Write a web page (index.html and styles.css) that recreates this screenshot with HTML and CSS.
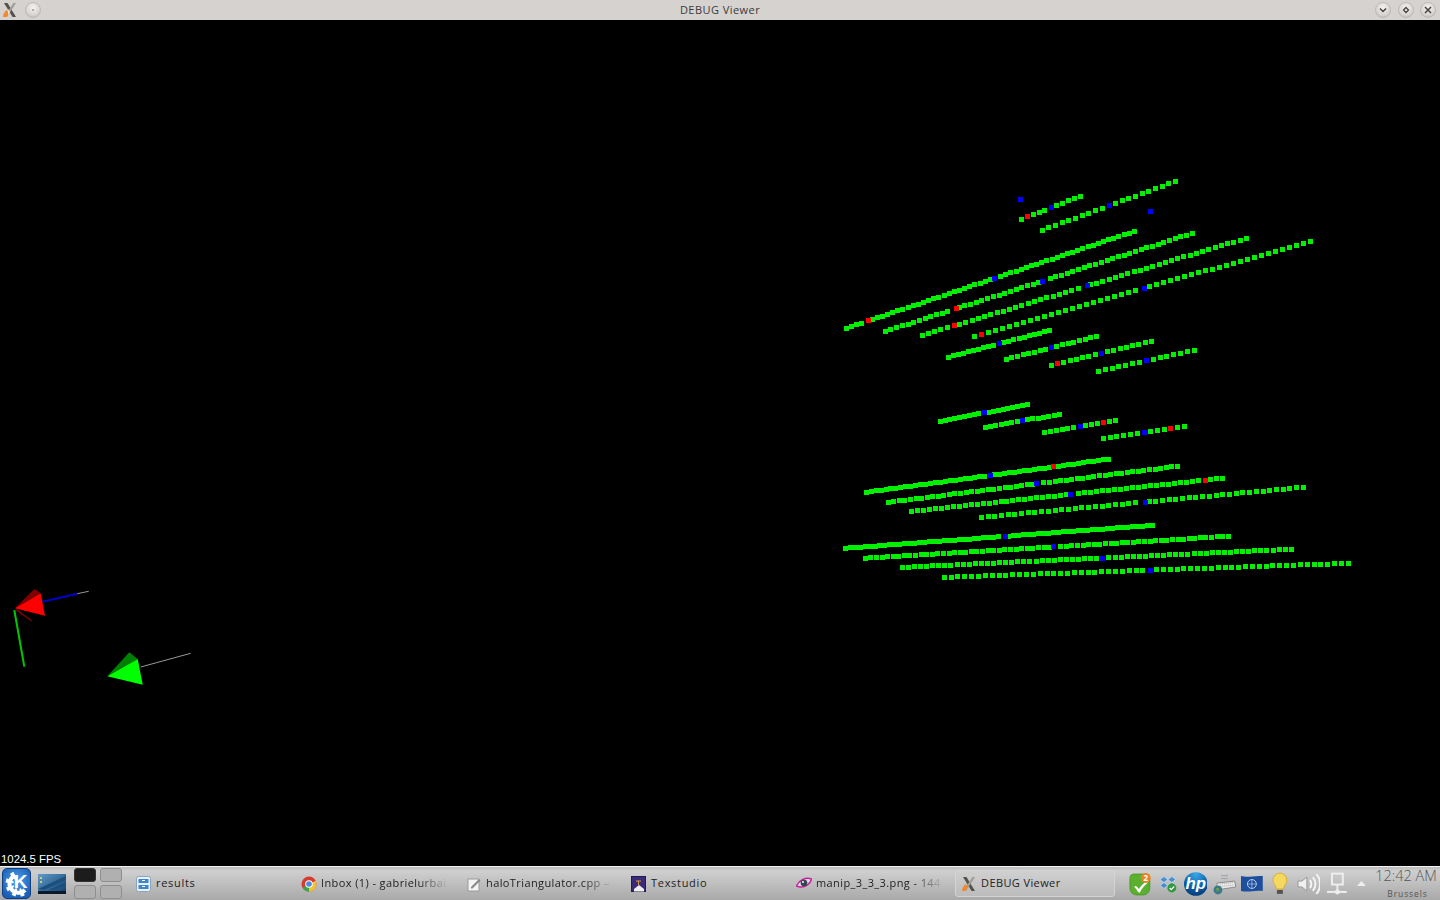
FILE: index.html
```html
<!DOCTYPE html>
<html lang="en">
<head>
<meta charset="utf-8">
<title>DEBUG Viewer</title>
<link rel="stylesheet" href="styles.css">
</head>
<body>
<header class="titlebar">
  <div class="title-left">
    <svg class="x-icon" width="16" height="16" viewBox="0 0 16 16"><path d="M2 1h3.500l8.500 14h-3.500z" fill="#55524e"/><path d="M14 1h-2.500L2 15h3z" fill="#a09c97"/><path d="M1 15c0-3 1.500-5 3.500-7l2 2.500L5 15z" fill="#ef8a2e"/><path d="M6 7l2 3-2 3" fill="#f6e8d8"/></svg>
    <span class="wbtn"><i class="dot"></i></span>
  </div>
  <div class="title-text">DEBUG Viewer</div>
  <div class="title-right">
    <span class="wbtn"><svg width="8" height="8" viewBox="0 0 8 8"><path d="M1 2.500l3 3 3-3" fill="none" stroke="#444" stroke-width="1.500"/></svg></span>
    <span class="wbtn"><svg width="8" height="8" viewBox="0 0 8 8"><path d="M4 1.500L6.500 4 4 6.500 1.500 4z" fill="none" stroke="#444" stroke-width="1.300"/></svg></span>
    <span class="wbtn"><svg width="8" height="8" viewBox="0 0 8 8"><path d="M1 1l6 6M7 1L1 7" fill="none" stroke="#444" stroke-width="1.500"/></svg></span>
  </div>
</header>

<main class="viewer">
  <svg id="scene" class="scene" viewBox="0 20 1440 846" width="1440" height="846">
    <g id="points" shape-rendering="crispEdges"></g>
    <polygon points="15,608.300 34.300,589 40.700,593.300" fill="#7f0000"/>
    <line x1="16" y1="609.300" x2="31.700" y2="621" stroke="#7f0000" stroke-width="1.500"/>
    <line x1="42.300" y1="601.700" x2="77.300" y2="593.700" stroke="#0000c8" stroke-width="2"/>
    <line x1="77.300" y1="593.700" x2="88.700" y2="591.300" stroke="#999" stroke-width="1"/>
    <line x1="14.300" y1="610" x2="24.300" y2="666.700" stroke="#00c800" stroke-width="2"/>
    <polygon points="15,608.300 40.700,593.300 45,615.700" fill="#ff0000"/>
    <polygon points="107.300,676.300 129.300,652.300 137.700,659" fill="#007f00"/>
    <line x1="140.700" y1="667" x2="190.700" y2="653.300" stroke="#999" stroke-width="1"/>
    <polygon points="107.300,676.300 137.700,659 142.700,684.700" fill="#00ff00"/>
  </svg>
  <div class="fps">1024.5 FPS</div>
</main>

<footer class="taskbar">
  <div class="launcher">
    <svg class="gear" width="28" height="30" viewBox="0 0 28 30"><path d="M12 6.500A9 9 0 1 0 22 21" fill="none" stroke="#fff" stroke-width="4"/><path d="M12 6.500A9 9 0 1 0 22 21" fill="none" stroke="#fff" stroke-width="8" stroke-dasharray="3 3.500"/></svg>
    <span class="kde-k">K</span>
  </div>
  <svg class="desktop-icon" width="28" height="20" viewBox="0 0 28 20">
    <defs><linearGradient id="dsk" x1="0" y1="0" x2="1" y2="1"><stop offset="0" stop-color="#5f9ccc"/><stop offset="1" stop-color="#0f3c66"/></linearGradient></defs>
    <rect width="28" height="20" fill="url(#dsk)"/>
    <path d="M0 15L28 2v4L6 16zM10 16L28 8v3l-12 5z" fill="#1b4f80"/>
    <rect x="0" y="17" width="28" height="3" fill="#0a1a2a"/>
    <rect x="2" y="3" width="2" height="2" fill="#c8d070"/><rect x="2" y="7" width="2" height="2" fill="#c8d070"/>
  </svg>
  <div class="pager">
    <span class="desk active"></span><span class="desk"></span><span class="desk"></span><span class="desk"></span>
  </div>
  <div class="tasks">
    <div class="task">
      <svg width="16" height="16" viewBox="0 0 16 16"><rect x=".5" y=".5" width="14" height="15" rx="2" fill="#e8f0f8" stroke="#8aa4c0"/><rect x="2.500" y="3" width="10" height="4" fill="#3f86d0"/><rect x="2.500" y="9" width="10" height="4" fill="#3f86d0"/><rect x="6" y="4" width="3" height="1" fill="#fff"/><rect x="6" y="10" width="3" height="1" fill="#fff"/></svg>
      <span class="task-label wide">results</span>
    </div>
    <div class="task">
      <svg width="16" height="16" viewBox="0 0 16 16"><circle cx="8" cy="8" r="7.500" fill="#d93a2e"/><path d="M8 8L1.500 11.800A7.500 7.500 0 0 0 8 15.500z" fill="#3ca648"/><path d="M8 8l6.700-3.300A7.500 7.500 0 0 1 8 15.500z" fill="#f2c230"/><circle cx="8" cy="8" r="3.800" fill="#fff"/><circle cx="8" cy="8" r="2.800" fill="#4a8ae0"/></svg>
      <span class="task-label fade">Inbox (1) - gabrielurbai</span>
    </div>
    <div class="task">
      <svg width="16" height="16" viewBox="0 0 16 16"><path d="M2 3h11v12H2z" fill="#f4f4f4" stroke="#999"/><path d="M5 11l8-8 1.500 1.500-8 8H5z" fill="#888"/></svg>
      <span class="task-label fade">haloTriangulator.cpp –</span>
    </div>
    <div class="task">
      <svg width="16" height="16" viewBox="0 0 16 16"><rect x=".5" y=".5" width="14" height="15" fill="#3a2a78" stroke="#241a50"/><path d="M3 13l5-4 5 4v2.500H3z" fill="#eee"/><path d="M5 5h5M7.500 5v4" stroke="#d8a040" fill="none"/></svg>
      <span class="task-label wide">Texstudio</span>
    </div>
    <div class="task">
      <svg width="16" height="16" viewBox="0 0 16 16"><path d="M.5 10C3 4 10 1 15.500 3 14 9 7 13 .5 10z" fill="#d8d8e8" stroke="#c8209a" stroke-width="1.500"/><circle cx="8" cy="7" r="3.300" fill="#304850"/><circle cx="7" cy="6" r="1" fill="#fff"/></svg>
      <span class="task-label fade">manip_3_3_3.png - 144</span>
    </div>
    <div class="task current">
      <svg width="16" height="16" viewBox="0 0 16 16"><path d="M2 1h3.500l8.500 14h-3.500z" fill="#55524e"/><path d="M14 1h-2.500L2 15h3z" fill="#a09c97"/><path d="M1 15c0-3 1.500-5 3.500-7l2 2.500L5 15z" fill="#ef8a2e"/></svg>
      <span class="task-label">DEBUG Viewer</span>
    </div>
  </div>
  <div class="tray">
    <svg width="24" height="24" viewBox="0 0 24 24"><path d="M1 6c0-3 2-4 4-4h10c3 0 6 2 6 6v8c0 4-3 7-7 7H8c-4 0-7-3-7-7z" fill="#5cb030" stroke="#4a9a28"/><path d="M6 14c2 0 3 1.500 4 3 3-4 5-6 8-8l1 1.500c-3 3-6 6-8 10-1 .5-2-.5-2.500-1.500C7.500 17.500 6.500 16 5.500 15.500z" fill="#fff"/><circle cx="17" cy="6" r="5" fill="#e88420"/><text x="17" y="9" class="badge">2</text></svg>
    <svg width="18" height="18" viewBox="0 0 18 18"><path d="M1 4.500l4-3 4 3-4 3zM9 4.500l4-3 4 3-4 3zM1 10.500l4-3 4 3-4 3zM9 10.500l4-3 4 3-4 3z" fill="#4a90cc" stroke="#d8e8f4" stroke-width=".6"/><circle cx="13" cy="13" r="4.500" fill="#2f9a3a"/><path d="M10.800 13l1.600 1.700 3-3.200" stroke="#fff" fill="none" stroke-width="1.300"/></svg>
    <svg class="tray-hp" width="24" height="24" viewBox="0 0 24 24"><defs><radialGradient id="hpg" cx=".5" cy=".1" r=".9"><stop offset="0" stop-color="#3aa8e8"/><stop offset=".6" stop-color="#0a60a8"/><stop offset="1" stop-color="#063c78"/></radialGradient></defs><circle cx="12" cy="12" r="12" fill="url(#hpg)"/><text x="12" y="17.500" class="hp">hp</text></svg>
    <svg width="24" height="22" viewBox="0 0 24 22"><path d="M8 3c2-2 4 1 7-1M8 6c2-2 4 1 7-1" stroke="#9aa0a8" fill="none"/><path d="M4 10l18-2 1 6-19 3z" fill="#e8e8e8" stroke="#8a8a8a"/><path d="M7 11l13-1.500M7 13.500l14-1.500" stroke="#aaa" stroke-dasharray="1 1"/><circle cx="5" cy="17" r="4.500" fill="#3b7a8a"/><path d="M3 15h3v2l-2 2z" fill="#6aa040"/></svg>
    <svg width="22" height="18" viewBox="0 0 22 18"><path d="M0 1c7 2 14-1 22 0v15c-8-1-15 2-22 0z" fill="#1d4f9c"/><circle cx="11" cy="9" r="4.500" fill="none" stroke="#b8cce8"/><path d="M6.500 9h9M11 4.500v9" stroke="#b8cce8" stroke-width=".7"/></svg>
    <svg class="bulb" width="16" height="24" viewBox="0 0 16 24"><path d="M8 1a7 7 0 0 0-7 7c0 4 3 5 3.500 9h7C12 13 15 12 15 8a7 7 0 0 0-7-7z" fill="#f4d860" stroke="#d8b030"/><rect x="5" y="18" width="6" height="4" fill="#555"/></svg>
    <svg class="tray-speaker" width="24" height="24" viewBox="0 0 24 24"><path d="M1 9h4l5-4v14l-5-4H1z" fill="#f0f0f0" stroke="#999"/><path d="M13 8c2 2 2 6 0 8M16 5c3.500 4 3.500 10 0 14M19.500 2c5 5 5 15 0 20" fill="none" stroke="#f4f4f4" stroke-width="2"/></svg>
    <svg width="22" height="24" viewBox="0 0 22 24"><rect x="6" y="1.500" width="11" height="11" fill="none" stroke="#eee" stroke-width="2"/><path d="M11.500 13v6" stroke="#eee" stroke-width="2"/><path d="M1 20h20" stroke="#eee" stroke-width="2"/><circle cx="11.500" cy="20" r="2.500" fill="#eee"/></svg>
    <svg class="tray-arrow" width="9" height="5" viewBox="0 0 9 5"><path d="M4.500 0L9 5H0z" fill="#eee"/></svg>
  </div>
  <div class="clock">
    <div class="clock-time">12:42 AM</div>
    <div class="clock-zone">Brussels</div>
  </div>
</footer>
<script src="main.js"></script>
</body>
</html>
```

FILE: styles.css
```css
* { box-sizing: border-box; }
html, body { margin: 0; height: 100%; overflow: hidden; background: #000; }
body { display: flex; flex-direction: column; width: 1440px; height: 900px; }

.titlebar {
  height: 20px; flex: none; display: flex; align-items: center; justify-content: space-between;
  padding: 0 2px; background: #d6d2d0; position: relative;
}
.title-left { display: flex; align-items: center; gap: 7px; }
.title-right { display: flex; align-items: center; gap: 6.500px; padding-right: 2px; }
.title-text {
  flex: 1; text-align: center; font: 11px/22px "Open Sans", sans-serif; color: #3a3a3a; letter-spacing: .45px;
}
.title-left, .title-right { width: 70px; }
.title-right { justify-content: flex-end; }
.x-icon { flex: none; }
.wbtn {
  width: 16px; height: 16px; border-radius: 50%; flex: none; display: flex; align-items: center; justify-content: center;
  background: radial-gradient(circle at 50% 35%, #f4f3f2, #d8d5d3 60%, #b4b0ae);
  border: 1px solid #bdb9b7;
}
.dot { width: 2px; height: 2px; border-radius: 50%; background: #999; }

.viewer { flex: 1; position: relative; background: #000; min-height: 0; }
.scene { display: block; }
.fps {
  position: absolute; left: 1px; bottom: 0; font: 11.400px/14px "Liberation Sans", sans-serif; color: #fff;
}

.taskbar {
  height: 34px; flex: none; display: flex; align-items: center; padding-left: 2px;
  border-top: 1px solid #f2f2f2;
  background: linear-gradient(#bdbdbd, #cfcfcf 12%, #a9a9a9 100%);
  font: 11px "Open Sans", sans-serif; color: #222;
}
.launcher {
  width: 29px; height: 31px; border-radius: 5px; flex: none; display: flex; align-items: center; justify-content: center;
  background: radial-gradient(circle at 50% 40%, #4fa0ee, #1a5fb4 80%); border: 1px solid #0f3f80;
  position: relative; overflow: hidden;
}
.gear { position: absolute; left: 0; top: 0; }
.kde-k { font: 700 19px/1 "Liberation Sans", sans-serif; color: #fff; position: relative; left: 4px; top: -2px; }
.desktop-icon { margin-left: 7px; flex: none; }
.pager {
  margin-left: 8px; flex: none; width: 48px; display: grid; grid-template-columns: 22px 22px; grid-auto-rows: 14px; gap: 3px 4px;
}
.desk { border: 1px solid #8e8e8e; border-radius: 3px; background: #b0b0b0; }
.desk.active { background: #1c1c1c; border-color: #333; }
.tasks { margin-left: 8px; width: 990px; flex: none; display: flex; gap: 5px; align-items: center; }
.task {
  width: 160px; height: 27px; flex: none; display: flex; align-items: center; gap: 4px; padding: 0 6px 2px; overflow: hidden;
  letter-spacing: .4px; white-space: nowrap;
}
.task svg { flex: none; position: relative; top: 1px; }
.task.current {
  padding-left: 5px;
  border: 1px solid #d4d4d4; border-radius: 3px; background: linear-gradient(#d0d0d0, #bcbcbc);
}
.task-label { flex: 1; }
.task-label.wide { letter-spacing: .7px; }
.fade {
  -webkit-mask-image: linear-gradient(to right, #000 75%, transparent 100%);
  mask-image: linear-gradient(to right, #000 75%, transparent 100%);
}
.tray { margin-left: 9px; flex: none; width: 237px; display: flex; align-items: center; gap: 6px; }
.tray svg:nth-child(5) { margin-left: -2px; }
.tray-hp { margin-left: 1px; }
.tray-speaker { margin-left: 3px; }
.badge { font: 700 8px "Open Sans", sans-serif; fill: #fff; text-anchor: middle; }
.hp { font: italic 700 17px "Liberation Sans", sans-serif; fill: #fff; text-anchor: middle; }
.bulb { margin-left: 3px; }
.tray-arrow { margin-left: 3px; }
.clock { position: absolute; right: 3px; bottom: 0; text-align: center; color: #555; width: 62px; }
.clock-time { font: 14.500px/18px "Open Sans", sans-serif; font-weight: 300; white-space: nowrap; position: relative; top: -3px; }
.clock-zone { font: 8.500px/12px "Open Sans", sans-serif; letter-spacing: .9px; white-space: nowrap; padding-left: 3px; }
```

FILE: main.js
```js
var lines = [
  [1021.3,219.3,1080.3,196.3,11,[[1027.3,'r'],[1051.3,'b']]],
  [1042.3,230.3,1175.3,181.3,21,[[1109.3,'b']]],
  [846.3,328.3,1134.3,231.3,57,[[868.3,'r'],[994.3,'b']]],
  [885.3,331.3,1192.3,233.3,55,[[956.3,'r'],[1042.3,'b']]],
  [922.3,335.3,1246.3,238.3,53,[[954.3,'r'],[1087.3,'b']]],
  [974.3,336.3,1310.3,241.3,49,[[981.3,'r'],[1144.3,'b']]],
  [948.3,357.3,1049.3,330.3,21,[[999.3,'b']]],
  [1006.3,359.3,1096.3,336.3,17,[[1051.3,'b']]],
  [1051.3,365.3,1151.3,341.3,17,[[1057.3,'r'],[1101.3,'b']]],
  [1098.3,371.3,1194.3,350.3,15,[[1146.3,'b']]],
  [940.3,421.3,1027.3,404.7,19,[[984.3,'b']]],
  [985.3,427.3,1059.3,414.3,15,[[1022.3,'b']]],
  [1044.3,432.3,1115.3,420.3,13,[[1080.3,'b'],[1103.3,'r']]],
  [1103.3,438.3,1184.3,426.3,13,[[1144.3,'b'],[1170.3,'r']]],
  [866.3,492.3,1108.3,459.3,50,[[990.3,'b'],[1053,'r']]],
  [888.3,502.3,1177.3,466.3,53,[[1036.3,'b']]],
  [911.3,511.3,1222.3,478.3,53,[[1070.3,'b'],[1205.3,'r']]],
  [981.3,517.3,1303.3,487.3,49,[[1145.3,'b']]],
  [845.3,548.3,1152.3,525.3,63,[[1005.3,'b']]],
  [865.3,558.3,1228.3,536.3,66,[[1053.3,'b']]],
  [902.3,567.3,1291.3,549.3,65,[[1102.3,'b']]],
  [944.3,577.3,1348.3,563.3,60,[[1150.3,'b']]]
];
var singles = [[1020.3,199.3],[1150.3,211.3]];
var colors = { g: '#00f000', r: '#ff0000', b: '#0000ff' };
var group = document.getElementById('points');

function square(cx, cy, color) {
  var r = document.createElementNS('http://www.w3.org/2000/svg', 'rect');
  r.setAttribute('x', Math.round(cx - 2.5));
  r.setAttribute('y', Math.round(cy - 2.5));
  r.setAttribute('width', 5);
  r.setAttribute('height', 5);
  r.setAttribute('fill', color);
  group.appendChild(r);
}

lines.forEach(function (l) {
  var n = l[4];
  var dx = (l[2] - l[0]) / (n - 1), dy = (l[3] - l[1]) / (n - 1);
  var skip = {};
  l[5].forEach(function (m) { skip[Math.round((m[0] - l[0]) / dx)] = true; });
  for (var i = 0; i < n; i++) {
    if (!skip[i]) square(l[0] + dx * i, l[1] + dy * i, colors.g);
  }
  l[5].forEach(function (m) {
    square(m[0], l[1] + (m[0] - l[0]) * dy / dx, colors[m[1]]);
  });
});
singles.forEach(function (s) { square(s[0], s[1], colors.b); });
```
